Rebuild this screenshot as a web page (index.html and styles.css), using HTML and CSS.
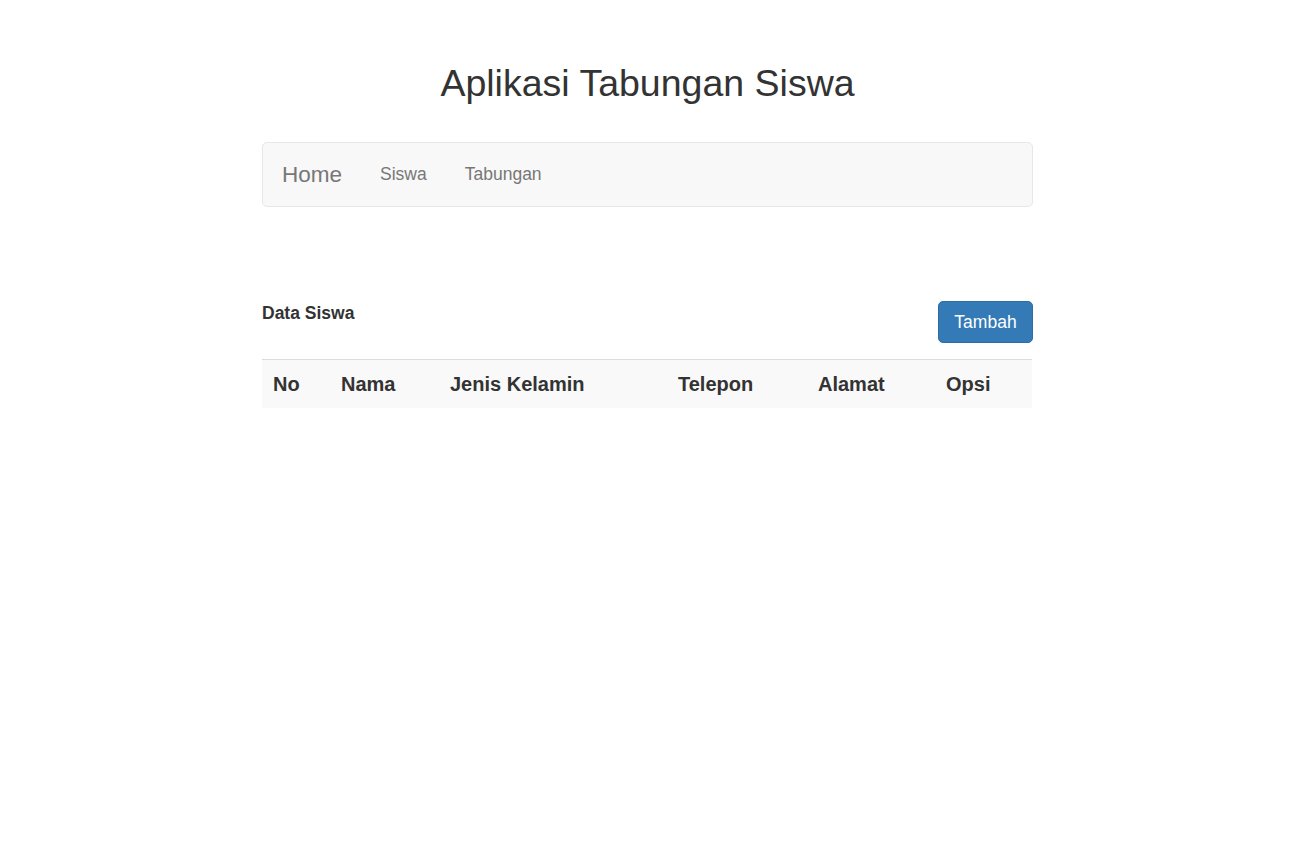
FILE: index.html
```html
<!DOCTYPE html>
<html lang="id">
<head>
<meta charset="utf-8">
<title>Aplikasi Tabungan Siswa</title>
<link rel="stylesheet" href="styles.css">
</head>
<body>
<div class="container">
  <h1 class="title">Aplikasi Tabungan Siswa</h1>
  <nav class="navbar">
    <a class="brand" href="#">Home</a>
    <a class="nav-link" href="#">Siswa</a>
    <a class="nav-link" href="#">Tabungan</a>
  </nav>
  <div class="section-head">
    <h4 class="section-title">Data Siswa</h4>
    <a class="btn-primary" href="#">Tambah</a>
  </div>
  <table class="table">
    <thead>
      <tr>
        <th class="c-no">No</th>
        <th class="c-nama">Nama</th>
        <th class="c-jk">Jenis Kelamin</th>
        <th class="c-tel">Telepon</th>
        <th class="c-alamat">Alamat</th>
        <th class="c-opsi">Opsi</th>
      </tr>
    </thead>
    <tbody></tbody>
  </table>
</div>
</body>
</html>
```
FILE: styles.css
```css
html, body {
  margin: 0;
  padding: 0;
  background: #fff;
}
body {
  font-family: "Liberation Sans", Arial, sans-serif;
  font-size: 17.5px;
  line-height: 1.42857;
  color: #333;
}
.container {
  width: 771px;
  margin: 0 auto;
}
.title {
  margin: 63px 0 0;
  font-size: 37.5px;
  font-weight: 400;
  line-height: 1.1;
  text-align: center;
  color: #333;
}
.navbar {
  margin-top: 38px;
  box-sizing: border-box;
  height: 65px;
  display: flex;
  align-items: center;
  background: #f8f8f8;
  border: 1px solid #e7e7e7;
  border-radius: 5px;
  padding: 0 0 0 19px;
}
.navbar a {
  text-decoration: none;
  color: #777;
}
.brand {
  font-size: 22.5px;
  line-height: 25px;
  margin-right: 19px;
}
.nav-link {
  font-size: 17.5px;
  line-height: 25px;
  padding: 0 19px;
}
.section-head {
  margin-top: 94px;
  display: flex;
  justify-content: space-between;
  align-items: flex-start;
}
.section-title {
  margin: 0;
  font-size: 17.5px;
  font-weight: 700;
  line-height: 25px;
  color: #333;
}
.btn-primary {
  display: inline-block;
  box-sizing: border-box;
  height: 42px;
  width: 95px;
  text-align: center;
  padding: 8px 0;
  font-size: 17.5px;
  line-height: 25px;
  color: #fff;
  text-decoration: none;
  background: #337ab7;
  border: 1px solid #2e6da4;
  border-radius: 5px;
}
.table {
  margin-top: 16px;
  width: 770px;
  border-collapse: collapse;
  border-spacing: 0;
}
.table th {
  text-align: left;
  font-size: 20px;
  font-weight: 700;
  line-height: 28px;
  padding: 10px 10px 10px 11px;
  background: #f9f9f9;
  border-top: 1px solid #ddd;
  color: #333;
}
.c-no { width: 47px; }
.c-nama { width: 88px; }
.c-jk { width: 207px; }
.c-tel { width: 119px; }
.c-alamat { width: 107px; }
.c-opsi { width: 76px; }
```
